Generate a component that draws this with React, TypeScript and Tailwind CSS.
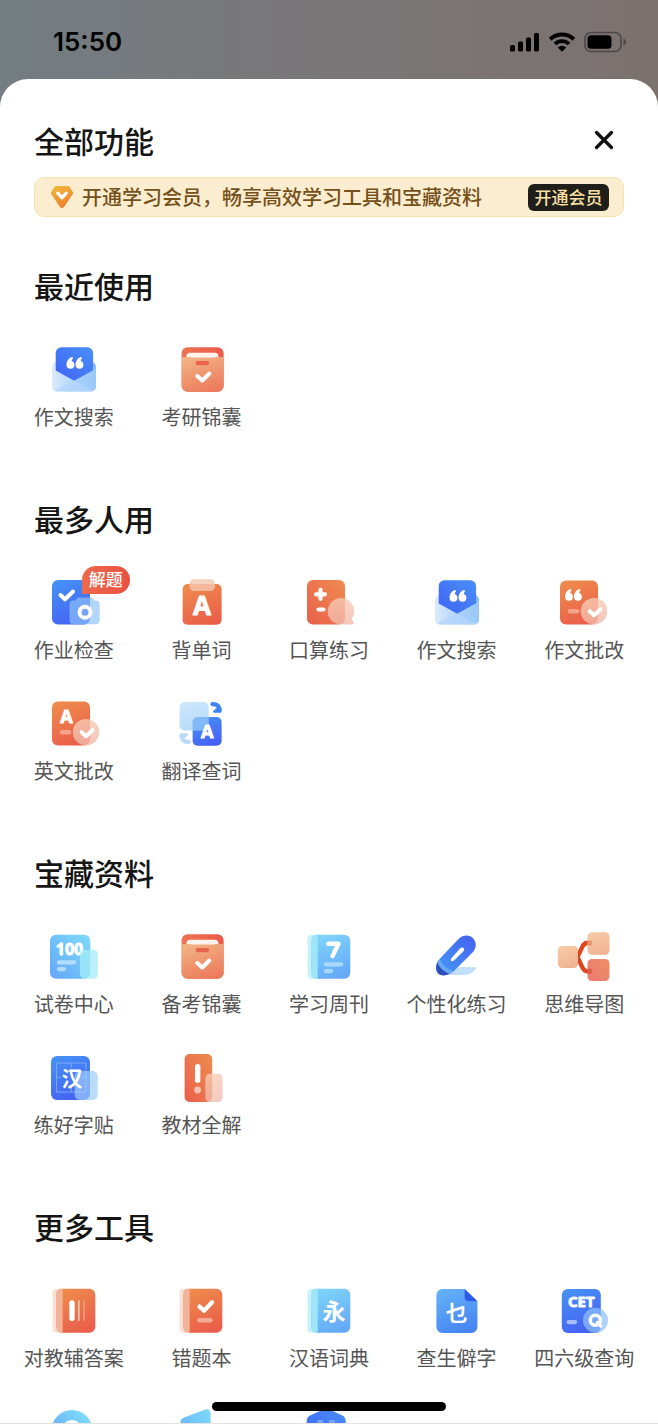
import type { ReactNode } from "react";

type Item = {
  name: string;
  icon: ReactNode;
  badge?: string;
};

type Section = {
  title: string;
  items: Item[];
};

function Gradient({ id, from, to, dir = "down" }: { id: string; from: string; to: string; dir?: string }) {
  const ends: Record<string, number[]> = {
    down: [0.3, 0, 0.7, 1],
    up: [1, 0, 0, 1],
    right: [0, 0, 1, 0],
  };
  const [x1, y1, x2, y2] = ends[dir];

  return (
    <linearGradient id={id} x1={x1} y1={y1} x2={x2} y2={y2}>
      <stop offset="0" stopColor={from} />
      <stop offset="1" stopColor={to} />
    </linearGradient>
  );
}

// gradients shared by all the icons
function Gradients() {
  return (
    <svg width="0" height="0" className="absolute" aria-hidden="true">
      <defs>
        <Gradient id="blue" from="#468ff5" to="#4560f3" />
        <Gradient id="blueUp" from="#4a8ff7" to="#3f63f5" dir="up" />
        <Gradient id="orange" from="#ee8a4c" to="#ea5d4a" />
        <Gradient id="orangeUp" from="#ee8c50" to="#ea5f4c" dir="up" />
        <Gradient id="folder" from="#ed7350" to="#ea5a49" dir="right" />
        <Gradient id="peach" from="#f2b183" to="#ec7a5b" />
        <Gradient id="peachLight" from="#f6caa6" to="#f1b291" />
        <Gradient id="coral" from="#ee8f66" to="#ec7a72" dir="up" />
        <Gradient id="sky" from="#7ed4fa" to="#65a8f7" />
        <Gradient id="skyUp" from="#7edcf9" to="#63a6fa" dir="up" />
        <Gradient id="page" from="#63b0f6" to="#4684f3" />
        <Gradient id="envelope" from="#dcebfd" to="#82bcf8" dir="right" />
        <Gradient id="ice" from="#c4e2fc" to="#a9d3fa" />
        <Gradient id="blush" from="#f6cdb4" to="#f2b8ab" />
        <Gradient id="gem" from="#f2b63c" to="#ea7b2b" />
        <Gradient id="pen" from="#4560ef" to="#4596f6" dir="up" />
      </defs>
    </svg>
  );
}

function Svg({ children }: { children: ReactNode }) {
  return (
    <svg viewBox="0 0 56 56" className="size-14" aria-hidden="true">
      {children}
    </svg>
  );
}

function Check({ d, width = 4 }: { d: string; width?: number }) {
  return (
    <path d={d} fill="none" stroke="#fff" strokeWidth={width} strokeLinecap="round" strokeLinejoin="round" />
  );
}

function Letter({ x, y, size, children }: { x: number; y: number; size: number; children: string }) {
  return (
    <text
      x={x}
      y={y}
      fontSize={size}
      textAnchor="middle"
      fill="#fff"
      stroke="#fff"
      strokeWidth="0.9"
      strokeLinejoin="round"
      className="font-['Open_Sans',sans-serif] font-bold"
    >
      {children}
    </text>
  );
}

function Hanzi({ x, y, size, children }: { x: number; y: number; size: number; children: string }) {
  return (
    <text
      x={x}
      y={y}
      fontSize={size}
      textAnchor="middle"
      fill="#fff"
      className="font-['Noto_Sans_CJK_SC',sans-serif] font-bold"
    >
      {children}
    </text>
  );
}

function Quotes({ x, y }: { x: number; y: number }) {
  return (
    <g transform={`translate(${x} ${y})`} fill="#fff">
      <circle cx="4" cy="7.8" r="3.9" />
      <path d="M.1 7.6C.2 4 2.4 1 5.400.1c.8-.2 1.400.7.9 1.300C5.300 2.700 5 3.900 5.200 5.500Z" />
      <circle cx="13" cy="7.8" r="3.9" />
      <path d="M9.100 7.600C9.200 4 11.400 1 14.400.1c.8-.2 1.400.7.9 1.300-1 1.300-1.300 2.500-1.100 4.100Z" />
    </g>
  );
}

function EnvelopeIcon() {
  return (
    <Svg>
      <path d="M6 26.500C6 23 8 21 11 21h34c3 0 5 2 5 5.500V45.500a5 5 0 0 1-5 5H11a5 5 0 0 1-5-5Z" fill="url(#envelope)" />
      <path d="M9.700 12a5.700 5.700 0 0 1 5.700-5.700h26a5.700 5.700 0 0 1 5.700 5.700v17.500L28.300 39.700 9.700 29.500Z" fill="url(#blueUp)" />
      <path d="M28.300 39.700 50 27.500v18a5 5 0 0 1-2 4Z" fill="#a9d0fa" opacity=".6" />
      <path d="M8 49.500 28.300 39.700 48 49.500a5 5 0 0 1-3 1H11a5 5 0 0 1-3-1Z" fill="#b4d5fb" opacity=".8" />
      <Quotes x={20.5} y={16} />
    </Svg>
  );
}

function BoxIcon() {
  return (
    <Svg>
      <rect x="8.600" y="6.300" width="42" height="44.400" rx="6" fill="url(#folder)" />
      <path d="M13.300 20v-4c0-3 1.500-4.300 4-4.300h24.300c2.500 0 4 1.300 4 4.300v4Z" fill="#fff3ee" />
      <path d="M8.600 16h7.500q1.500 0 2.500.5h22q1-.5 2.500-.5h7.500v28.700a6 6 0 0 1-6 6h-30a6 6 0 0 1-6-6Z" fill="url(#peach)" />
      <rect x="22.600" y="20" width="13.500" height="4.200" rx="2.100" fill="#e9644b" />
      <Check d="M24.300 35 29.300 39.500 36.300 32.500" />
    </Svg>
  );
}

function HomeworkIcon() {
  return (
    <Svg>
      <rect x="6" y="6" width="38" height="44.500" rx="6" fill="url(#blue)" />
      <path
        d="M27.500 26.500h2l1.500-2c.6-.8 1.200-1 2-1h12c.8 0 1.400.2 2 1l1.500 2h1.200a4 4 0 0 1 4 4v15.700a4 4 0 0 1-4 4H27.500a4 4 0 0 1-4-4V30.500a4 4 0 0 1 4-4Z"
        fill="#8fc3fa"
        opacity=".68"
      />
      <circle cx="39" cy="38.300" r="5.500" fill="none" stroke="#fff" strokeWidth="4" />
      <Check d="M14.500 21 19 25.300 27 17.500" />
    </Svg>
  );
}

function WordsIcon() {
  return (
    <Svg>
      <rect x="9.600" y="10" width="39" height="40.700" rx="5" fill="url(#orange)" />
      <rect x="16.600" y="5.200" width="25.400" height="11.800" rx="4.500" fill="#f5c6b0" opacity=".8" />
      <Letter x={29} y={41} size={26}>A</Letter>
    </Svg>
  );
}

function MathIcon() {
  return (
    <Svg>
      <rect x="6" y="6" width="38" height="44.500" rx="6" fill="url(#orangeUp)" />
      <path d="M40 24a13 13 0 0 1 10.500 20.800l2 3.400c.7 1.300.1 2.300-1.200 2.300H40A13.200 13.200 0 0 1 40 24Z" fill="url(#blush)" opacity=".78" />
      <Check d="M19.500 15.800v9M15 20.300h9M17.500 35.500h5" width={4.2} />
    </Svg>
  );
}

function CorrectionIcon({ x, children }: { x: number; children: ReactNode }) {
  return (
    <Svg>
      <g transform={`translate(${x} 0)`}>
        <rect x="6" y="6.500" width="38" height="44" rx="6" fill="url(#orange)" />
        <rect x="13.700" y="35" width="11.500" height="4.400" rx="2.200" fill="#f4a48a" />
        <circle cx="40" cy="37.200" r="13.200" fill="url(#blush)" opacity=".8" />
        <Check d="M35.700 37.200 40 41.200 46.500 35.200" />
        {children}
      </g>
    </Svg>
  );
}

function TurnArrow({ color }: { color: string }) {
  return (
    <>
      <path d="M39.500 9.200c4.600-.2 6.700 1.800 6.900 6" fill="none" stroke={color} strokeWidth="4.200" strokeLinecap="round" />
      <path d="M41.500 17.800c-1.600 0-2-1-1-2l2.600-2.600h5.500v3c0 1-.6 1.600-1.600 1.600Z" fill={color} />
    </>
  );
}

function TranslateIcon() {
  return (
    <Svg>
      <rect x="19.600" y="22" width="29" height="28.700" rx="5" fill="url(#blue)" />
      <rect x="6.600" y="7" width="29" height="28.500" rx="5" fill="url(#ice)" opacity=".85" />
      <path d="M19.600 35.500V27a5 5 0 0 1 5-5h11v8.500a5 5 0 0 1-5 5Z" fill="#75b0f7" opacity=".7" />
      <TurnArrow color="#3f84f7" />
      <g transform="rotate(180 27.6 28)">
        <TurnArrow color="#b8dafb" />
      </g>
      <Letter x={34.3} y={43} size={18}>A</Letter>
    </Svg>
  );
}

function ExamIcon() {
  return (
    <Svg>
      <rect x="4" y="6.700" width="40.300" height="44" rx="6" fill="url(#skyUp)" />
      <Letter x={23.5} y={26.5} size={16}>100</Letter>
      <rect x="11" y="32.300" width="19.300" height="4.200" rx="2.100" fill="#b3ddfc" />
      <rect x="11" y="39" width="9" height="4.200" rx="2.100" fill="#b3ddfc" />
      <rect x="34" y="22" width="18" height="28.700" rx="4.500" fill="#a5ecf7" opacity=".75" />
    </Svg>
  );
}

function BookIcon({ tone, children }: { tone: "sky" | "orange"; children: ReactNode }) {
  const sky = tone === "sky";

  return (
    <Svg>
      <rect x="6.500" y="6.800" width="20" height="44" rx="4" fill={sky ? "#c8f1fc" : "#fadfd5"} />
      <rect x="10.500" y="6.800" width="38.800" height="44" rx="6" fill={sky ? "url(#sky)" : "url(#orange)"} />
      <path d="M16.700 6.800v44h-2a4.200 4.200 0 0 1-4.200-4.200V11a4.200 4.200 0 0 1 4.200-4.200Z" fill={sky ? "#9de5f9" : "#f3b399"} />
      {children}
    </Svg>
  );
}

function PenIcon() {
  return (
    <Svg>
      <path d="M18 47 28 40c5-2 12 0 17.500-1 1.500 0 1.800.8 1 2-3 4-7 6-12 6Z" fill="#c2defb" />
      <path d="M10 32C6.500 36 6 42 9 45.500c3 3 9 2.500 13-1Z" fill="#2a4fbd" />
      <path d="M29.500 11C34 6.500 41 6.500 44.200 10.500c3.600 4 3.200 9.500-.2 13.500L24.500 43.500C18 42 11.500 36.500 10.500 31Z" fill="url(#pen)" />
      <path d="M10.800 30.700c1.700 5.300 7.700 11.300 13.900 12.500L21.500 45.800C15.500 44.500 10 39.500 8.300 34Z" fill="#65a9f7" />
      <path d="M22.200 30.500 31 20.500c1.200-1.300 2.900-1.200 3.700-.2.800 1 .6 2.300-.4 3.300L25 32.600c-2.200 1.600-4.200-.2-2.800-2.100Z" fill="#fff" />
    </Svg>
  );
}

function MindMapIcon() {
  return (
    <Svg>
      <path d="M35 15h-4c-3 0-4 2-5 4.500L21.500 29l4.700 10c1 2.500 2 4.300 5 4.300H35" fill="none" stroke="#e0461d" strokeWidth="4.300" strokeLinecap="round" strokeLinejoin="round" />
      <rect x="1.800" y="18" width="20.200" height="22" rx="4.500" fill="url(#peachLight)" />
      <rect x="31.500" y="4.300" width="22" height="22.400" rx="4.500" fill="url(#peachLight)" />
      <rect x="31.500" y="31" width="22" height="22" rx="4.500" fill="url(#coral)" />
      <circle cx="33.500" cy="15" r="2.800" fill="#e27a50" opacity=".6" />
      <circle cx="33.500" cy="43.300" r="2.800" fill="#d9482a" opacity=".6" />
    </Svg>
  );
}

function CopybookIcon() {
  return (
    <Svg>
      <rect x="5" y="7" width="39" height="44" rx="6" fill="url(#blue)" />
      <path d="M10.500 14h29.500v29H10.500ZM25.300 14v5M25.300 39v4M10.500 28.500h4M36 28.500h4" fill="none" stroke="#7fa5fa" strokeWidth="1" />
      <rect x="28.700" y="22" width="23" height="29" rx="5" fill="#9ccdfb" opacity=".7" />
      <Hanzi x={26} y={37} size={21}>汉</Hanzi>
    </Svg>
  );
}

function TextbookIcon() {
  return (
    <Svg>
      <rect x="11.600" y="5" width="27.600" height="48" rx="5" fill="url(#orangeUp)" />
      <rect x="22" y="15" width="5.400" height="19" rx="2.700" fill="#fff" />
      <circle cx="24.600" cy="41" r="3.400" fill="#f8c4b0" />
      <rect x="32.300" y="24.700" width="17.300" height="28.300" rx="4.500" fill="url(#blush)" opacity=".75" />
    </Svg>
  );
}

function RareWordIcon() {
  return (
    <Svg>
      <path d="M13.400 7h22.300l12.700 12.300V45a6 6 0 0 1-6 6h-29a6 6 0 0 1-6-6V13a6 6 0 0 1 6-6Z" fill="url(#page)" />
      <path d="M35.700 7 48.400 19.300h-8.700a4 4 0 0 1-4-4Z" fill="#2e5be6" />
      <Hanzi x={27.8} y={38.5} size={22}>乜</Hanzi>
    </Svg>
  );
}

function CetIcon() {
  return (
    <Svg>
      <rect x="5.800" y="7" width="39" height="44" rx="6" fill="url(#blue)" />
      <Letter x={25.3} y={25} size={15}>CET</Letter>
      <rect x="10.500" y="38" width="10.700" height="4.200" rx="2.100" fill="#a5bdfb" />
      <circle cx="39.500" cy="38.300" r="12.500" fill="#8dc0fa" opacity=".72" />
      <circle cx="39.300" cy="38.300" r="5" fill="none" stroke="#fff" strokeWidth="3.400" />
      <Check d="M41.500 40.500 44.800 44" width={3.4} />
    </Svg>
  );
}

function ClockIcon() {
  return (
    <Svg>
      <circle cx="26" cy="27.500" r="15.500" fill="none" stroke="url(#skyUp)" strokeWidth="10" />
    </Svg>
  );
}

function SpeakerIcon() {
  return (
    <Svg>
      <path d="M7.600 19c0-2 .8-3.300 3-4.200L31.500 6.700c3.500-1.400 6.100.3 6.100 3.800V50H7.600Z" fill="url(#skyUp)" />
    </Svg>
  );
}

function RobotIcon() {
  return (
    <Svg>
      <path d="M22 6.500q3-1.500 6.500 0l13 6q3.200 1.700 3.200 5.500v24H5.700V18q0-3.800 3.300-5.500Z" fill="url(#blueUp)" />
      <rect x="16.300" y="17" width="6" height="8" rx="1" fill="#79a3fa" />
      <rect x="28" y="17" width="6" height="8" rx="1" fill="#79a3fa" />
    </Svg>
  );
}

const sections: Section[] = [
  {
    title: "最近使用",
    items: [
      { name: "作文搜索", icon: <EnvelopeIcon /> },
      { name: "考研锦囊", icon: <BoxIcon /> },
    ],
  },
  {
    title: "最多人用",
    items: [
      { name: "作业检查", icon: <HomeworkIcon />, badge: "解题" },
      { name: "背单词", icon: <WordsIcon /> },
      { name: "口算练习", icon: <MathIcon /> },
      { name: "作文搜索", icon: <EnvelopeIcon /> },
      {
        name: "作文批改",
        icon: (
          <CorrectionIcon x={-2}>
            <Quotes x={11} y={15} />
          </CorrectionIcon>
        ),
      },
      {
        name: "英文批改",
        icon: (
          <CorrectionIcon x={0}>
            <Letter x={20.5} y={27.5} size={18}>A</Letter>
          </CorrectionIcon>
        ),
      },
      { name: "翻译查词", icon: <TranslateIcon /> },
    ],
  },
  {
    title: "宝藏资料",
    items: [
      { name: "试卷中心", icon: <ExamIcon /> },
      { name: "备考锦囊", icon: <BoxIcon /> },
      {
        name: "学习周刊",
        icon: (
          <BookIcon tone="sky">
            <Check d="M27.300 15.700h10.200L31.500 28" width={4.4} />
            <rect x="22.700" y="34.200" width="19.600" height="4.200" rx="2.100" fill="#a8d8fb" />
            <rect x="22.700" y="41" width="9.600" height="4.200" rx="2.100" fill="#a8d8fb" />
          </BookIcon>
        ),
      },
      { name: "个性化练习", icon: <PenIcon /> },
      { name: "思维导图", icon: <MindMapIcon /> },
      { name: "练好字贴", icon: <CopybookIcon /> },
      { name: "教材全解", icon: <TextbookIcon /> },
    ],
  },
  {
    title: "更多工具",
    items: [
      {
        name: "对教辅答案",
        icon: (
          <BookIcon tone="orange">
            <rect x="23.300" y="18.300" width="5.400" height="20.700" rx="2.700" fill="#fff" />
            <rect x="32" y="18.300" width="1.600" height="20.700" rx=".8" fill="#f9cdb9" />
            <rect x="37.300" y="18.300" width="1.400" height="20.700" rx=".7" fill="#f3a284" />
          </BookIcon>
        ),
      },
      {
        name: "错题本",
        icon: (
          <BookIcon tone="orange">
            <Check d="M26.500 24.700 31 28.700 39 20.300" width={4.4} />
            <rect x="24.300" y="36" width="15.300" height="4.400" rx="2.200" fill="#f6ab93" />
          </BookIcon>
        ),
      },
      {
        name: "汉语词典",
        icon: (
          <BookIcon tone="sky">
            <Hanzi x={33} y={38} size={23}>永</Hanzi>
          </BookIcon>
        ),
      },
      { name: "查生僻字", icon: <RareWordIcon /> },
      { name: "四六级查询", icon: <CetIcon /> },
      { name: "", icon: <ClockIcon /> },
      { name: "", icon: <SpeakerIcon /> },
      { name: "", icon: <RobotIcon /> },
    ],
  },
];

function StatusBar() {
  return (
    <header className="flex h-[79px] shrink-0 items-center justify-between pt-1 pr-[31px] pl-[53px]">
      <span className="font-['Inter',sans-serif] text-[26px] font-semibold text-black">15:50</span>
      <div className="flex items-center gap-2">
        <svg viewBox="0 0 30 20" className="h-5 w-[30px]" aria-hidden="true">
          <rect x="0" y="13" width="5" height="6.500" rx="1.500" />
          <rect x="8" y="9.500" width="5" height="10" rx="1.500" />
          <rect x="16" y="5.500" width="5" height="14" rx="1.500" />
          <rect x="24" y="1" width="5" height="18.500" rx="1.500" />
        </svg>
        <svg viewBox="0 0 28 20" className="h-5 w-7" aria-hidden="true">
          <path d="M2.200 7.200a17 17 0 0 1 23.600 0" fill="none" stroke="#000" strokeWidth="4" />
          <path d="M7 12a10 10 0 0 1 14 0" fill="none" stroke="#000" strokeWidth="3.800" />
          <path d="M14 19.800 9.800 15.500a6 6 0 0 1 8.400 0Z" />
        </svg>
        <svg viewBox="0 0 43 22" className="h-[22px] w-[43px]" aria-hidden="true">
          <rect x="1" y="1.500" width="36" height="19" rx="6" fill="none" stroke="#4b4747" strokeWidth="1.600" />
          <rect x="3.500" y="4.200" width="24" height="13.600" rx="3.500" />
          <path d="M39.500 7.500q2.500 1 2.500 3.500t-2.500 3.500Z" fill="#4b4747" />
        </svg>
      </div>
    </header>
  );
}

function VipBanner() {
  return (
    <div className="mx-[34px] mt-5 flex h-10 items-center rounded-[10px] border border-[#f8e2ae] bg-[#fbedcf] pr-[14px] pl-[15px]">
      <svg viewBox="0 0 24 24" className="size-6 shrink-0" aria-hidden="true">
        <path d="M6.500 1h11q1.500 0 2.300 1.200l2.900 4.600q.8 1.400-.2 2.700l-8.300 12.300q-2.200 2.400-4.400 0L1.500 9.500q-1-1.300-.2-2.700l2.900-4.600Q5 1 6.500 1Z" fill="url(#gem)" />
        <path d="M7.800 8.200 12 12.700l4.200-4.500" fill="none" stroke="#fff" strokeWidth="3.400" strokeLinecap="round" strokeLinejoin="round" />
      </svg>
      <span className="ml-2 grow text-[20px] leading-7 font-medium whitespace-nowrap text-[#76501a]">
        开通学习会员，畅享高效学习工具和宝藏资料
      </span>
      <button className="h-[27px] w-[81px] shrink-0 rounded-md bg-[#201e1a] text-[17px] leading-6 font-medium text-[#fbe0a6]">
        开通会员
      </button>
    </div>
  );
}

function Tool({ item }: { item: Item }) {
  return (
    <button className="flex flex-col items-center gap-[5px]">
      <span className="relative">
        {item.icon}
        {item.badge && (
          <span className="absolute -top-2 left-9 h-7 w-12 rounded-[14px] rounded-bl-none bg-linear-to-r from-[#ec6a4e] to-[#e9503f] text-[17px] leading-[26px] font-medium text-white">
            {item.badge}
          </span>
        )}
      </span>
      <span className="h-[30px] text-[20px] leading-[30px] whitespace-nowrap text-[#555]">{item.name}</span>
    </button>
  );
}

export default function App() {
  return (
    <div className="relative flex h-screen flex-col overflow-hidden bg-linear-to-r from-[#737d82] via-[#7a7678] to-[#7b726f] font-['Noto_Sans_CJK_SC',sans-serif]">
      <Gradients />
      <StatusBar />

      <main className="min-h-0 grow overflow-hidden rounded-t-[28px] bg-white pt-11">
        <div className="flex h-[34px] items-center justify-between pr-10 pl-[34px]">
          <h1 className="text-[30px] leading-[34px] font-medium text-[#151515]">全部功能</h1>
          <button aria-label="关闭" className="p-1">
            <svg viewBox="0 0 20 20" className="size-5" aria-hidden="true">
              <path d="M2.500 2.500 17.500 17.500M17.500 2.500 2.500 17.500" stroke="#111" strokeWidth="3.400" strokeLinecap="round" />
            </svg>
          </button>
        </div>

        <VipBanner />

        <div className="mt-[51px] flex flex-col gap-[69px]">
          {sections.map((section) => (
            <section key={section.title}>
              <h2 className="mb-[39px] pl-[34px] text-[30px] leading-[34px] font-medium text-[#151515]">
                {section.title}
              </h2>
              <div className="grid grid-cols-5 gap-y-[30px] px-[10px]">
                {section.items.map((item, i) => (
                  <Tool key={i} item={item} />
                ))}
              </div>
            </section>
          ))}
        </div>
      </main>

      <div className="absolute inset-x-0 bottom-0 h-px bg-[#e3e3e3]" />
      <div className="absolute bottom-[13px] left-1/2 h-[9px] w-[234px] -translate-x-1/2 rounded-full bg-black" />
    </div>
  );
}
